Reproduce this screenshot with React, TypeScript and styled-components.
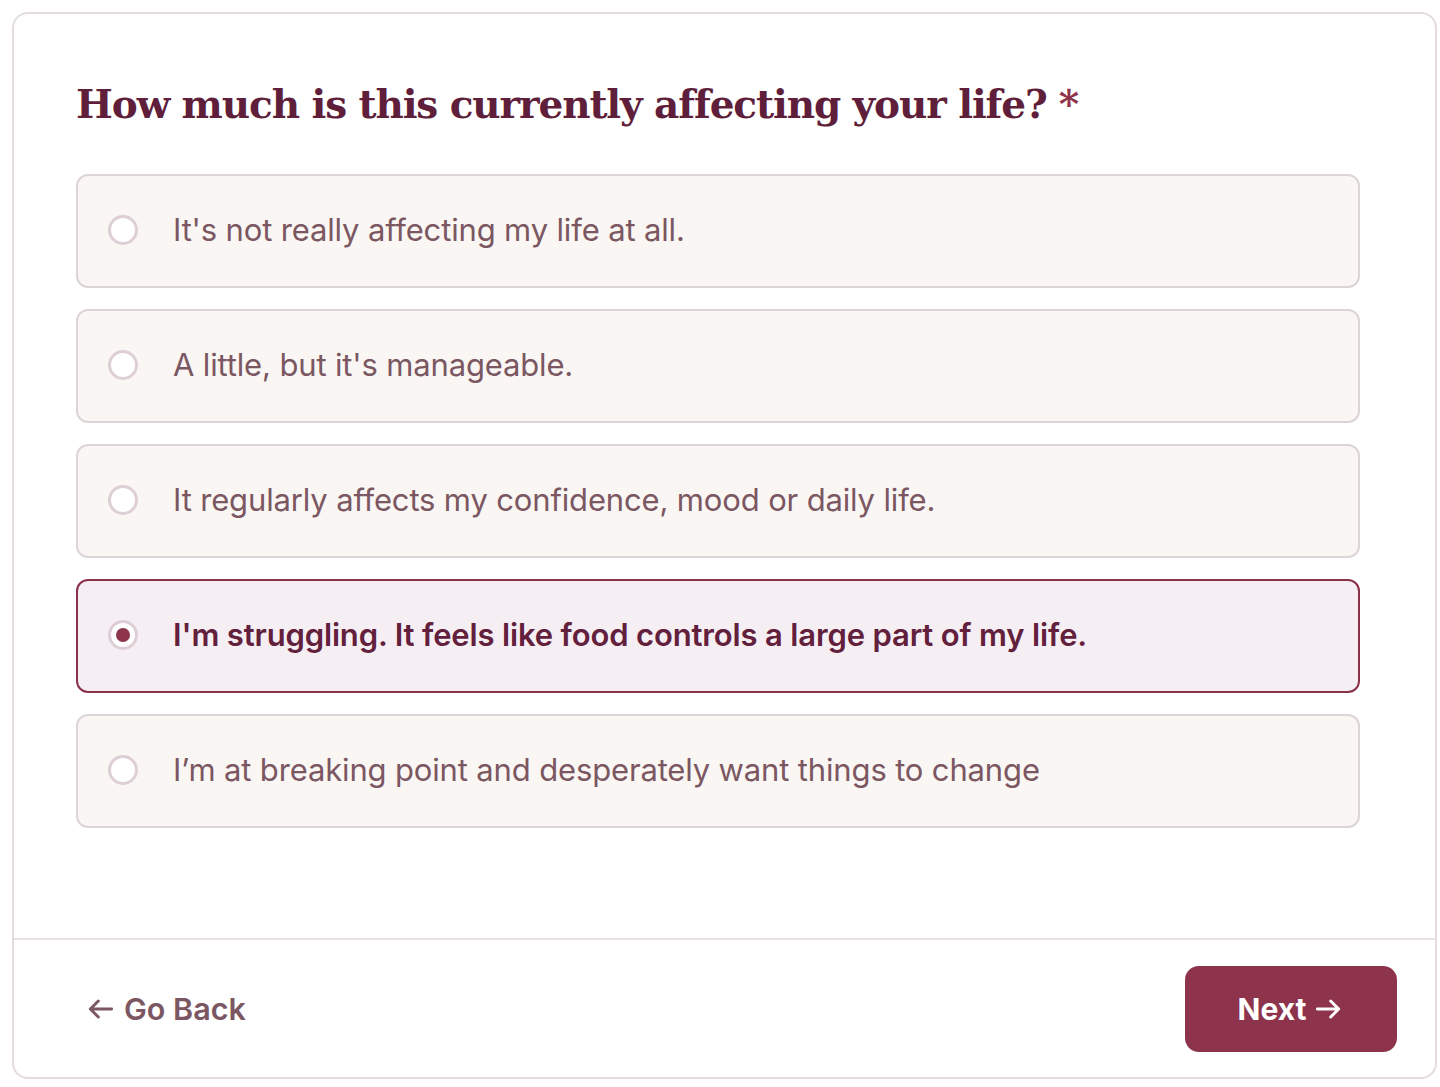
import React, { useState } from 'react';
import styled, { createGlobalStyle } from 'styled-components';

const GlobalStyle = createGlobalStyle`
  html, body {
    margin: 0;
    padding: 0;
    background: #ffffff;
  }
  body {
    font-family: Inter, "Noto Sans", sans-serif;
  }
  * {
    box-sizing: border-box;
  }
`;

const Page = styled.div`
  padding: 12px 3px 8px 12px;
`;

// Outer card holding question and footer
const Card = styled.div`
  width: 1425px;
  height: 1067px;
  border: 2px solid #e4dcdf;
  border-radius: 16px;
  display: flex;
  flex-direction: column;
  background: #fff;
`;

const Body = styled.div`
  flex: 1;
  padding: 64px 75px 0 62px;
`;

const Title = styled.h1`
  margin: 0 0 44px 0;
  font-family: "DejaVu Serif", "Liberation Serif", serif;
  font-weight: 700;
  font-size: 39px;
  line-height: 52px;
  letter-spacing: -1.1px;
  color: #5f1f3b;
`;

const Required = styled.span`
  color: #8d334b;
  margin-left: 12px;
`;

const Options = styled.div`
  display: flex;
  flex-direction: column;
  gap: 21px;
`;

const Option = styled.label<{ $selected: boolean }>`
  height: 114px;
  display: flex;
  align-items: center;
  gap: 35px;
  padding: 0 30px 3px;
  border-radius: 12px;
  border: 2px solid ${({ $selected }) => ($selected ? '#8a3049' : '#ddd4d7')};
  background: ${({ $selected }) => ($selected ? '#f5eff3' : '#f9f6f3')};
  cursor: pointer;
`;

const Radio = styled.span<{ $selected: boolean }>`
  width: 30px;
  height: 30px;
  border-radius: 50%;
  border: 3px solid #ddcfd5;
  background: #fff;
  display: flex;
  align-items: center;
  justify-content: center;
  flex-shrink: 0;

  &::after {
    content: '';
    width: 14px;
    height: 14px;
    border-radius: 50%;
    background: #8d334b;
    display: ${({ $selected }) => ($selected ? 'block' : 'none')};
  }
`;

const OptionText = styled.span<{ $selected: boolean }>`
  font-size: 31px;
  font-weight: ${({ $selected }) => ($selected ? 600 : 400)};
  color: ${({ $selected }) => ($selected ? '#63203d' : '#7b5762')};
  letter-spacing: -0.15px;
`;

const Footer = styled.div`
  height: 139px;
  border-top: 2px solid #e8e1e3;
  display: flex;
  align-items: center;
  justify-content: space-between;
  padding: 0 38px 0 71px;
`;

const BackButton = styled.button`
  background: none;
  border: none;
  padding: 0;
  display: flex;
  align-items: center;
  gap: 7px;
  font-family: Inter, sans-serif;
  font-size: 30.5px;
  font-weight: 600;
  color: #7b5762;
  cursor: pointer;
`;

const NextButton = styled.button`
  width: 212px;
  height: 86px;
  border: none;
  border-radius: 14px;
  background: #8d334b;
  color: #fff;
  font-family: Inter, sans-serif;
  font-size: 30px;
  font-weight: 700;
  display: flex;
  align-items: center;
  justify-content: center;
  gap: 6px;
  cursor: pointer;
`;

const Arrow: React.FC<{ dir: 'left' | 'right' }> = ({ dir }) => (
  <svg width="32" height="32" viewBox="0 0 24 24" fill="none" stroke="currentColor" strokeWidth="2.2" strokeLinecap="round" strokeLinejoin="round">
    {dir === 'left' ? (
      <path d="M20 12H4M10 6l-6 6 6 6" />
    ) : (
      <path d="M4 12h16M14 6l6 6-6 6" />
    )}
  </svg>
);

const answers = [
  "It's not really affecting my life at all.",
  "A little, but it's manageable.",
  'It regularly affects my confidence, mood or daily life.',
  "I'm struggling. It feels like food controls a large part of my life.",
  'I’m at breaking point and desperately want things to change',
];

const App: React.FC = () => {
  const [selected, setSelected] = useState(3);

  return (
    <Page>
      <GlobalStyle />
      <Card>
        <Body>
          <Title>
            How much is this currently affecting your life?<Required>*</Required>
          </Title>
          <Options>
            {answers.map((a, i) => (
              <Option key={a} $selected={selected === i} onClick={() => setSelected(i)}>
                <Radio $selected={selected === i} />
                <OptionText $selected={selected === i}>{a}</OptionText>
              </Option>
            ))}
          </Options>
        </Body>
        <Footer>
          <BackButton>
            <Arrow dir="left" />
            Go Back
          </BackButton>
          <NextButton>
            Next
            <Arrow dir="right" />
          </NextButton>
        </Footer>
      </Card>
    </Page>
  );
};

export default App;
